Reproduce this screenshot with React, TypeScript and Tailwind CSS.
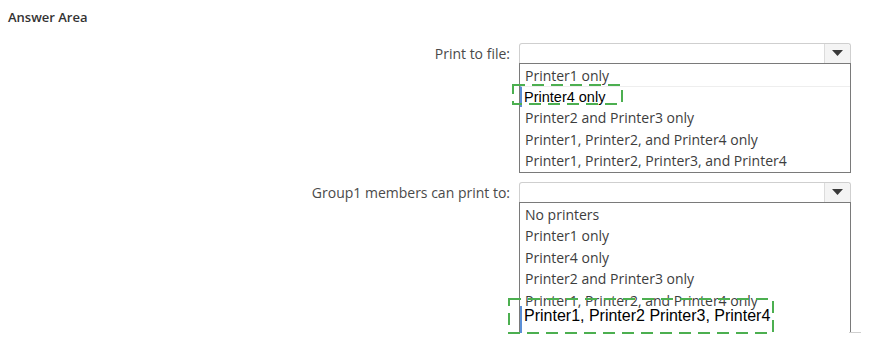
import React from 'react';

const sans = { fontFamily: '"Open Sans", "Noto Sans", sans-serif' };
const arial = { fontFamily: '"Liberation Sans", Arial, sans-serif' };

interface DropProps {
    label: string;
    options: string[];
    picked: number;
    box: { left: number; top: number; width: number; height: number };
    tail?: boolean;
}

const Dashed: React.FC<{ w: number; h: number }> = ({ w, h }) => (
    <svg width={w} height={h} className="block">
        <rect x={1} y={1} width={w - 2} height={h - 2} fill="none" stroke="#4caf50" strokeWidth={2} strokeDasharray="12 7" />
    </svg>
);

const Dropdown: React.FC<DropProps> = ({ label, options, picked, box, tail }) => (
    <div className="flex items-start">
        <div className="w-[519px] pr-[9px] text-right text-[14px] leading-[21px] text-[#4a4a4a]" style={sans}>
            {label}
        </div>
        <div className="relative w-[332px]">
            {/* closed select */}
            <div className="flex h-[20px] rounded-t-[3px] border border-b-0 border-[#cfcfcf] bg-white">
                <div className="flex-1" />
                <div className="flex w-[26px] items-center justify-center rounded-tr-[3px] border-l border-[#dcdcdc] bg-[#f4f4f4]">
                    <svg width="11" height="6" viewBox="0 0 11 6">
                        <path d="M0 0h11L5.5 6z" fill="#3a3a3a" />
                    </svg>
                </div>
            </div>
            {/* open list */}
            <div className={`border border-[#7a7a7a] bg-white pt-[1px] ${tail ? 'border-b-0' : ''}`}>
                {options.map((o, i) =>
                    i === picked ? (
                        <div
                            key={o}
                            className={`border-l-2 border-[#5b8fd6] pl-[2px] text-black ${tail ? '-mt-[5px] h-[27px] text-[16px] leading-[20px]' : 'border-t border-t-[#eeeeee] text-[14.5px] leading-[20px]'}`}
                            style={arial}
                        >
                            {o}
                        </div>
                    ) : (
                        <div key={o} className="pl-[5px] text-[14px] leading-[21.5px] text-[#3d3d3d]" style={sans}>
                            {o}
                        </div>
                    )
                )}
            </div>
            {tail && <div className="absolute -right-[10px] bottom-0 h-px w-[12px] bg-[#cfcfcf]" />}
            <div className="absolute" style={{ left: box.left, top: box.top }}>
                <Dashed w={box.width} h={box.height} />
            </div>
        </div>
    </div>
);

export default function App() {
    return (
        <div className="h-[351px] w-[872px] overflow-hidden bg-white">
            <div className="pl-[8px] pt-[8px] text-[13px] font-semibold text-[#333]" style={sans}>
                Answer Area
            </div>
            <div className="mt-[15px] flex flex-col gap-[9px]">
                <Dropdown
                    label="Print to file:"
                    options={[
                        'Printer1 only',
                        'Printer4 only',
                        'Printer2 and Printer3 only',
                        'Printer1, Printer2, and Printer4 only',
                        'Printer1, Printer2, Printer3, and Printer4',
                    ]}
                    picked={1}
                    box={{ left: -7, top: 41, width: 111, height: 21 }}
                />
                <Dropdown
                    label="Group1 members can print to:"
                    options={[
                        'No printers',
                        'Printer1 only',
                        'Printer4 only',
                        'Printer2 and Printer3 only',
                        'Printer1, Printer2, and Printer4 only',
                        'Printer1, Printer2 Printer3, Printer4',
                    ]}
                    picked={5}
                    box={{ left: -11, top: 116, width: 266, height: 36 }}
                    tail
                />
            </div>
        </div>
    );
}
